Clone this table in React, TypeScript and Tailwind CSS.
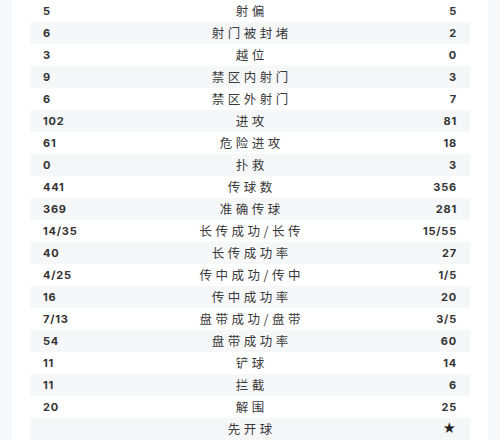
import React from "react";

const rows: [string, string, string][] = [
  ["5", "射偏", "5"],
  ["6", "射门被封堵", "2"],
  ["3", "越位", "0"],
  ["9", "禁区内射门", "3"],
  ["6", "禁区外射门", "7"],
  ["102", "进攻", "81"],
  ["61", "危险进攻", "18"],
  ["0", "扑救", "3"],
  ["441", "传球数", "356"],
  ["369", "准确传球", "281"],
  ["14/35", "长传成功/长传", "15/55"],
  ["40", "长传成功率", "27"],
  ["4/25", "传中成功/传中", "1/5"],
  ["16", "传中成功率", "20"],
  ["7/13", "盘带成功/盘带", "3/5"],
  ["54", "盘带成功率", "60"],
  ["11", "铲球", "14"],
  ["11", "拦截", "6"],
  ["20", "解围", "25"],
  ["", "先开球", "★"],
];

export default function App() {
  return (
    <div className="w-[500px] h-[440px] bg-[#f7f8fa] overflow-hidden">
      <div className="mx-[12px] h-full bg-white px-[18px]">
        {rows.map(([l, m, r], i) => (
          <div
            key={i}
            className={`grid grid-cols-[1fr_auto_1fr] items-center h-[22px] px-[13px] ${
              i % 2 === 1 ? "bg-[#f6f7f9]" : "bg-white"
            }`}
          >
            <span className="text-[11px] font-bold text-[#333] [font-family:Inter,'Noto_Sans',sans-serif] tracking-[0.8px]">
              {l}
            </span>
            <span className="text-[12.5px] text-[#3a3a3a] [font-family:'Noto_Sans_CJK_SC',sans-serif] tracking-[3.5px] text-center pl-[3.5px]">
              {m}
            </span>
            <span className="text-[11px] font-bold text-[#333] [font-family:Inter,'Noto_Sans',sans-serif] tracking-[0.8px] text-right">
              {r === "★" ? <span className="text-[13px] text-[#222]">★</span> : r}
            </span>
          </div>
        ))}
      </div>
    </div>
  );
}
